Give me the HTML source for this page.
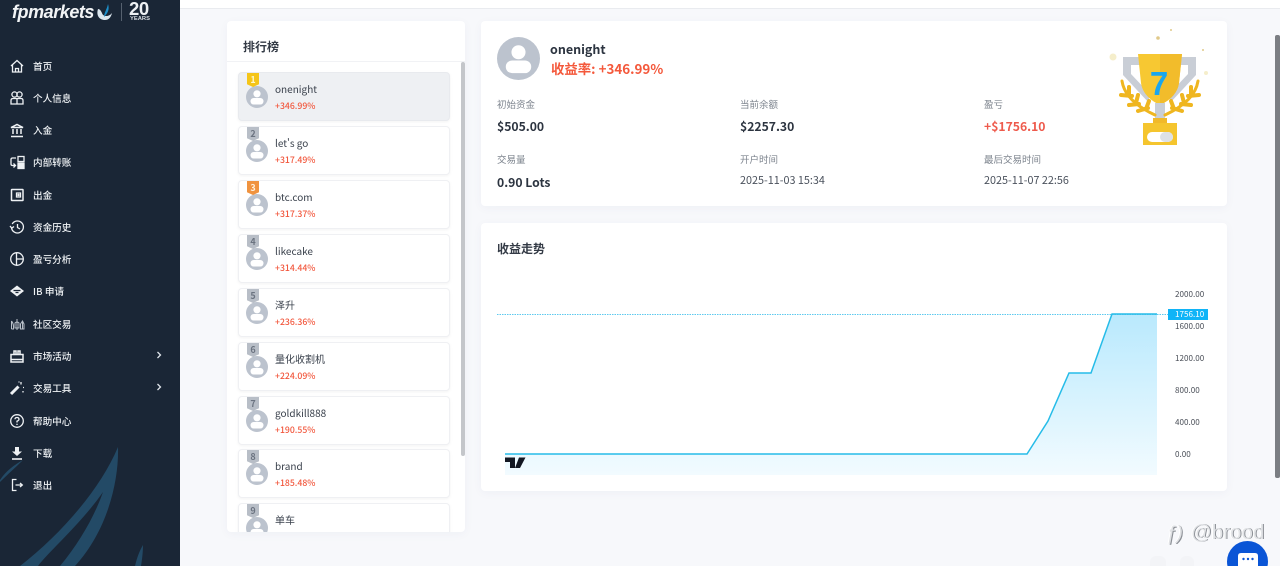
<!DOCTYPE html>
<html lang="zh"><head><meta charset="utf-8"><title>排行榜</title>
<style>
*{box-sizing:border-box;margin:0;padding:0}
html,body{width:1280px;height:566px;overflow:hidden;background:#f7f8fb;font-family:"Noto Sans CJK SC","Liberation Sans",sans-serif;color:#2c3440}
#r{position:absolute;left:0;top:0;width:1280px;height:566px;overflow:hidden;background:#f7f8fb}
#side{position:absolute;left:0;top:0;width:180px;height:566px;background:#1a2636;overflow:hidden}
.nav{position:absolute;left:33px;font-size:9.6px;line-height:14px;color:#eef1f4;font-weight:500;white-space:nowrap}
.ic{position:absolute;left:9px;width:16px;height:16px;fill:none;stroke:#eef1f4;stroke-width:1.3}
.chev{position:absolute;left:155px;width:8px;height:8px;fill:none;stroke:#dfe4ea;stroke-width:1.3}
#top{position:absolute;left:180px;top:0;width:1100px;height:9px;background:#fff;border-bottom:1px solid #e9ebef}
.card{position:absolute;background:#fff;border-radius:4px;box-shadow:0 2px 10px rgba(30,50,90,.04)}
.item{position:absolute;left:11px;width:212px;height:49px;background:#fff;border:1px solid #eff0f3;border-radius:4px;box-shadow:0 1px 3px rgba(0,0,0,.05)}
.item.on{background:#eef0f3;border-color:#e8eaee}
.rk{position:absolute;left:8px;top:0;width:12px;height:14px;background:#b8bec7;color:#6b7380;font-size:9px;line-height:13px;text-align:center;font-weight:700;clip-path:polygon(0 0,100% 0,100% 80%,50% 100%,0 80%)}
.av{position:absolute;left:7px;top:13px}
.nm{position:absolute;left:36px;top:8px;font-size:10px;line-height:15px;color:#3a414c;white-space:nowrap}
.pc{position:absolute;left:36px;top:27px;font-size:8.7px;line-height:12px;font-weight:500;color:#f2583e;white-space:nowrap}
.lb{position:absolute;font-size:9.5px;line-height:14px;color:#7d848e;white-space:nowrap}
.v{position:absolute;font-size:12.2px;line-height:18px;font-weight:700;color:#2c3440;white-space:nowrap}
.d{position:absolute;font-size:10.8px;line-height:15px;color:#4a515c;white-space:nowrap}
.y{position:absolute;left:1175px;font-size:8.1px;line-height:12px;color:#4b5059;white-space:nowrap}
</style></head><body><div id="r">
<div id="side">
<svg style="position:absolute;left:0;top:430px" width="180" height="136"><path d="M20 136C60 105 100 60 118 17C119 50 108 100 75 136H60C80 112 95 85 103 62C80 95 50 120 38 136Z" fill="#234a66"/><path d="M0 50C6 41 14 35 23 30C15 38 8 44 0 52Z" fill="#234a66"/><path d="M135 136C137 127 140 120 143 115C143 122 142 130 141 136Z" fill="#234a66"/></svg>
<div style="position:absolute;left:12px;top:0;font:italic 700 18px/25px 'Liberation Sans',sans-serif;color:#f2f4f6;letter-spacing:-.45px">fpmarkets</div>
<svg style="position:absolute;left:95px;top:2px" width="18" height="20"><path d="M3 7C1 13 4 18 10 18C14 18 16 15 17 11C14 15 8 15 7 11C6 9 5 7 3 7Z" fill="#dce7ef"/><path d="M13 2C12 7 9 11 9 15C12 12 15 8 13 2Z" fill="#1d8fc9"/></svg>
<div style="position:absolute;left:121px;top:3px;width:1px;height:18px;background:#56616f"></div>
<div style="position:absolute;left:129px;top:-1px;font:700 18.500px/20px 'Liberation Sans',sans-serif;color:#eef1f4;letter-spacing:-.4px">20</div>
<div style="position:absolute;left:130px;top:16px;font:700 5.800px/7px 'Liberation Sans',sans-serif;color:#d6dbe1">YEARS</div>

<svg class="ic" style="top:58px" viewBox="0 0 16 16"><path d="M2 8L8 2.500L14 8M3.500 7V14H12.500V7M6.500 14V10.500H9.500V14"/></svg><div class="nav" style="top:59px">首页</div>
<svg class="ic" style="top:90px" viewBox="0 0 16 16"><circle cx="5.500" cy="4.500" r="2.600"/><circle cx="10.500" cy="4.500" r="2.600"/><path d="M2 14V10.500Q2 8.500 4 8.500H12Q14 8.500 14 10.500V14ZM8 8.500V14"/></svg><div class="nav" style="top:91px">个人信息</div>
<svg class="ic" style="top:122px" viewBox="0 0 16 16"><path d="M2 5.500L8 2.500L14 5.500ZM4 7V12M8 7V12M12 7V12M2 14.500H14" stroke-width="1.500"/></svg><div class="nav" style="top:123px">入金</div>
<svg class="ic" style="top:154px" viewBox="0 0 16 16"><path d="M7 4H3.500Q2 4 2 5.500V10Q2 11.500 3.500 11.500H6M4.500 9.500L6.500 11.500L4.500 13.500"/><rect x="9" y="2.500" width="6" height="5"/><rect x="9" y="9" width="6" height="5.500" fill="#eef1f4"/></svg><div class="nav" style="top:155px">内部转账</div>
<svg class="ic" style="top:187px" viewBox="0 0 16 16"><rect x="2.500" y="2.500" width="11.500" height="11" rx=".5" stroke-width="1.500"/><path d="M7.500 6H11.500V10H7.500Z"/><circle cx="9.500" cy="8" r=".6"/></svg><div class="nav" style="top:188px">出金</div>
<svg class="ic" style="top:219px" viewBox="0 0 16 16"><path d="M3.200 5A6 6 0 1 1 2.500 9M1 7L2.800 9.200L5 7.500M8.500 5V8.500L11 10"/></svg><div class="nav" style="top:220px">资金历史</div>
<svg class="ic" style="top:251px" viewBox="0 0 16 16"><circle cx="8" cy="8" r="6.300"/><path d="M7.500 1.700V14.300M7.500 8H14.300"/></svg><div class="nav" style="top:252px">盈亏分析</div>
<svg class="ic" style="top:283px" viewBox="0 0 16 16"><path d="M8 2.500L15 8L8 13.500L1 8Z" fill="#eef1f4" stroke="none"/><path d="M4.500 7.500H11.500M6.500 9.500H9.500" stroke="#1a2636"/></svg><div class="nav" style="top:284px;letter-spacing:.1px">IB 申请</div>
<svg class="ic" style="top:316px;stroke:#b9c0c9;stroke-width:1" viewBox="0 0 16 16"><path d="M2.500 5V13M2.500 5Q5 8 4.500 13H2.500M8 3V14M6 7Q8 5 10 7V12H6ZM13.500 5V13M11.500 8L13.500 5L15 8V13H11.500Z"/></svg><div class="nav" style="top:317px">社区交易</div>
<svg class="ic" style="top:348px" viewBox="0 0 16 16"><path d="M2 6.500H14V14H2ZM5 6.500V3H7V6.500M9 6.500V3H11V6.500M2 11.500H14" stroke-width="1.500"/></svg><div class="nav" style="top:349px">市场活动</div><svg class="chev" style="top:351px" viewBox="0 0 8 8"><path d="M2.500 1L5.500 4L2.500 7"/></svg>
<svg class="ic" style="top:380px" viewBox="0 0 16 16"><path d="M2 14L9.500 6.500" stroke-width="3"/><path d="M12 2V4.500M14 7.500H15M10 1.500V2.500M14 11V12.500"/></svg><div class="nav" style="top:381px">交易工具</div><svg class="chev" style="top:383px" viewBox="0 0 8 8"><path d="M2.500 1L5.500 4L2.500 7"/></svg>
<svg class="ic" style="top:413px" viewBox="0 0 16 16"><circle cx="8" cy="8" r="6.300"/><path d="M6 6.300Q6 4.500 8 4.500Q10 4.500 10 6.200Q10 7.300 8 8.200V9.500M8 10.800V12"/></svg><div class="nav" style="top:414px">帮助中心</div>
<svg class="ic" style="top:445px" viewBox="0 0 16 16"><path d="M6 2H10V6.500H13L8 11L3 6.500H6Z" fill="#eef1f4" stroke="none"/><path d="M3 14H13" stroke-width="1.600"/></svg><div class="nav" style="top:446px">下载</div>
<svg class="ic" style="top:477px" viewBox="0 0 16 16"><path d="M7.500 2.500H3.500V13.500H7.500M6.500 8H13M11 6L13.300 8L11 10"/></svg><div class="nav" style="top:478px">退出</div>
</div>
<div id="top"></div>

<svg width="0" height="0" style="position:absolute"><defs><g id="a"><circle cx="11" cy="11" r="11" fill="#bcc3ce"/><circle cx="11" cy="7.800" r="3.600" fill="#fff"/><rect x="4.500" y="12" width="13" height="6.500" rx="3.200" fill="#fff"/></g></defs></svg>

<div class="card" style="left:227px;top:21px;width:238px;height:511px;overflow:hidden">
<div style="position:absolute;left:16px;top:17px;font-size:12px;line-height:18px;font-weight:700;color:#333a45">排行榜</div>
<div style="position:absolute;left:0;top:40px;width:238px;height:1px;background:#f1f2f5"></div>
<div style="position:absolute;left:234px;top:41px;width:4px;height:394px;background:#c4c6ca;border-radius:2px"></div>
<div class="item on" style="top:51px"><svg class="av" width="22" height="22"><use href="#a"/></svg><div class="rk" style="background:#f5c518;color:#fff8d0">1</div><div class="nm">onenight</div><div class="pc">+346.99%</div></div>
<div class="item" style="top:105px"><svg class="av" width="22" height="22"><use href="#a"/></svg><div class="rk">2</div><div class="nm">let's go</div><div class="pc">+317.49%</div></div>
<div class="item" style="top:159px"><svg class="av" width="22" height="22"><use href="#a"/></svg><div class="rk" style="background:#f0933f;color:#fff0dc">3</div><div class="nm">btc.com</div><div class="pc">+317.37%</div></div>
<div class="item" style="top:213px"><svg class="av" width="22" height="22"><use href="#a"/></svg><div class="rk">4</div><div class="nm">likecake</div><div class="pc">+314.44%</div></div>
<div class="item" style="top:267px"><svg class="av" width="22" height="22"><use href="#a"/></svg><div class="rk">5</div><div class="nm">泽升</div><div class="pc">+236.36%</div></div>
<div class="item" style="top:321px"><svg class="av" width="22" height="22"><use href="#a"/></svg><div class="rk">6</div><div class="nm">量化收割机</div><div class="pc">+224.09%</div></div>
<div class="item" style="top:375px"><svg class="av" width="22" height="22"><use href="#a"/></svg><div class="rk">7</div><div class="nm">goldkill888</div><div class="pc">+190.55%</div></div>
<div class="item" style="top:428px"><svg class="av" width="22" height="22"><use href="#a"/></svg><div class="rk">8</div><div class="nm">brand</div><div class="pc">+185.48%</div></div>
<div class="item" style="top:482px"><svg class="av" width="22" height="22"><use href="#a"/></svg><div class="rk">9</div><div class="nm">单车</div></div>
</div>

<div class="card" style="left:481px;top:21px;width:746px;height:185px"></div>
<svg style="position:absolute;left:497px;top:37px" width="43" height="43" viewBox="0 0 22 22"><use href="#a"/></svg>
<div style="position:absolute;left:550px;top:40px;font-size:12.5px;line-height:18px;font-weight:700;color:#2c3440">onenight</div>
<div style="position:absolute;left:551px;top:58px;font-size:13.4px;line-height:20px;font-weight:700;color:#f4583b;white-space:nowrap">收益率: +346.99%</div>
<div class="lb" style="left:497px;top:97px">初始资金</div><div class="v" style="left:497px;top:117px">$505.00</div>
<div class="lb" style="left:740px;top:97px">当前余额</div><div class="v" style="left:740px;top:117px">$2257.30</div>
<div class="lb" style="left:984px;top:97px">盈亏</div><div class="v" style="left:984px;top:117px;color:#ee5a4c">+$1756.10</div>
<div class="lb" style="left:497px;top:152px">交易量</div><div class="v" style="left:497px;top:173px">0.90 Lots</div>
<div class="lb" style="left:740px;top:152px">开户时间</div><div class="d" style="left:740px;top:173px">2025-11-03 15:34</div>
<div class="lb" style="left:984px;top:152px">最后交易时间</div><div class="d" style="left:984px;top:173px">2025-11-07 22:56</div>

<svg style="position:absolute;left:1105px;top:25px" width="105" height="125" viewBox="0 0 105 125">
<circle cx="53" cy="13" r="1.800" fill="#e0c98a"/><circle cx="66" cy="5" r="1" fill="#e0c98a"/><circle cx="8" cy="32" r="3.500" fill="#f5eecb"/><circle cx="98" cy="25" r="1" fill="#e0c98a"/><circle cx="101" cy="48" r="2" fill="#f5eecb"/>
<path d="M18 32H36V40H26V49L44 68V78L18 50ZM91 32H73V40H83V49L65 68V78L91 50Z" fill="#c9ced6"/>
<path d="M33 29H77L74 58Q72 72 55 80Q38 72 36 58Z" fill="#f7c832"/><path d="M55 29H77L74 58Q72 72 55 80Z" fill="#f2bc2b"/>
<path d="M50 78H60V95H50Z" fill="#c9ced6"/>
<g fill="none" stroke="#efb61f" stroke-linecap="round"><path d="M17 56Q20 76 50 90M93 56Q90 76 60 90" stroke-width="3"/><path d="M16 70L27 71M24 80L34 79M33 86L43 83M94 70L83 71M86 80L76 79M77 86L67 83M24 70L24 62M31 78L33 70M41 84L44 76M86 70L86 62M79 78L77 70M69 84L66 76" stroke-width="4"/></g>
<rect x="48" y="93" width="14" height="6" fill="#f1b92a"/><rect x="38" y="98" width="34" height="22" fill="#f5c52e"/>
<rect x="42" y="107" width="26" height="10" rx="5" fill="#fff"/><rect x="55" y="107" width="13" height="10" rx="5" fill="#dde1e6"/>
<text x="54" y="70" text-anchor="middle" font-family="Liberation Sans" font-weight="700" font-size="33" fill="#1aa6ee">7</text>
</svg>

<div class="card" style="left:481px;top:223px;width:746px;height:268px"></div>
<div style="position:absolute;left:497px;top:240px;font-size:12px;line-height:18px;font-weight:700;color:#333a45">收益走势</div>
<svg style="position:absolute;left:497px;top:280px" width="680" height="200">
<defs><linearGradient id="g" x1="0" y1="0" x2="0" y2="1"><stop offset="0" stop-color="#b9e9fd"/><stop offset="1" stop-color="#f2fbff"/></linearGradient></defs>
<path d="M8 174H530L551 141L572 93H594L615 34H660V195H8Z" fill="url(#g)"/>
<path d="M0 34.500H671" stroke="#5cc9ef" stroke-width="1" stroke-dasharray="1.500 1" fill="none"/>
<path d="M8 174H530L551 141L572 93H594L615 34H660" stroke="#26bce8" stroke-width="1.500" fill="none"/>
<path d="M8 177.500H18V188H13V182H8ZM22 177.500H28.500L23 188H18Z" fill="#131722"/>
</svg>
<div class="y" style="top:289px">2000.00</div>
<div style="position:absolute;left:1168px;top:309px;width:40px;height:11px;background:#10b4f7;color:#fff;font-size:8.1px;line-height:11px;padding-left:7px">1756.10</div>
<div class="y" style="top:321px">1600.00</div>
<div class="y" style="top:353px">1200.00</div>
<div class="y" style="top:385px">800.00</div>
<div class="y" style="top:417px">400.00</div>
<div class="y" style="top:449px">0.00</div>

<div style="position:absolute;left:1275px;top:35px;width:5px;height:443px;background:#7b7e83;border-radius:2px"></div>
<div style="position:absolute;left:1150px;top:556px;width:16px;height:12px;border-radius:6px 6px 0 0;background:#f3f4f7"></div>
<div style="position:absolute;left:1180px;top:556px;width:14px;height:12px;border-radius:6px 6px 0 0;background:#f3f4f7"></div>
<div style="position:absolute;left:1166px;top:521px;font:italic 400 19px/26px 'Liberation Sans',sans-serif;color:#dfe1e4;text-shadow:1px 1px 0 #8b8f95,-1px 0 0 #fff">ƒ)</div>
<div style="position:absolute;left:1191px;top:520px;font:400 20.500px/26px 'Liberation Sans',sans-serif;color:#e2e4e7;text-shadow:1px 0 0 #8b8f95,-1px 0 0 #fff;white-space:nowrap">@brood</div>
<div style="position:absolute;left:1227px;top:541px;width:41px;height:41px;border-radius:50%;background:#0a55d6"></div>
<svg style="position:absolute;left:1238px;top:553px" width="20" height="13"><path d="M3 0H17Q20 0 20 3V13H0V3Q0 0 3 0Z" fill="#fff"/><circle cx="5.500" cy="6" r="1.200" fill="#0a55d6"/><circle cx="10" cy="6" r="1.200" fill="#0a55d6"/><circle cx="14.500" cy="6" r="1.200" fill="#0a55d6"/></svg>
</div></body></html>
